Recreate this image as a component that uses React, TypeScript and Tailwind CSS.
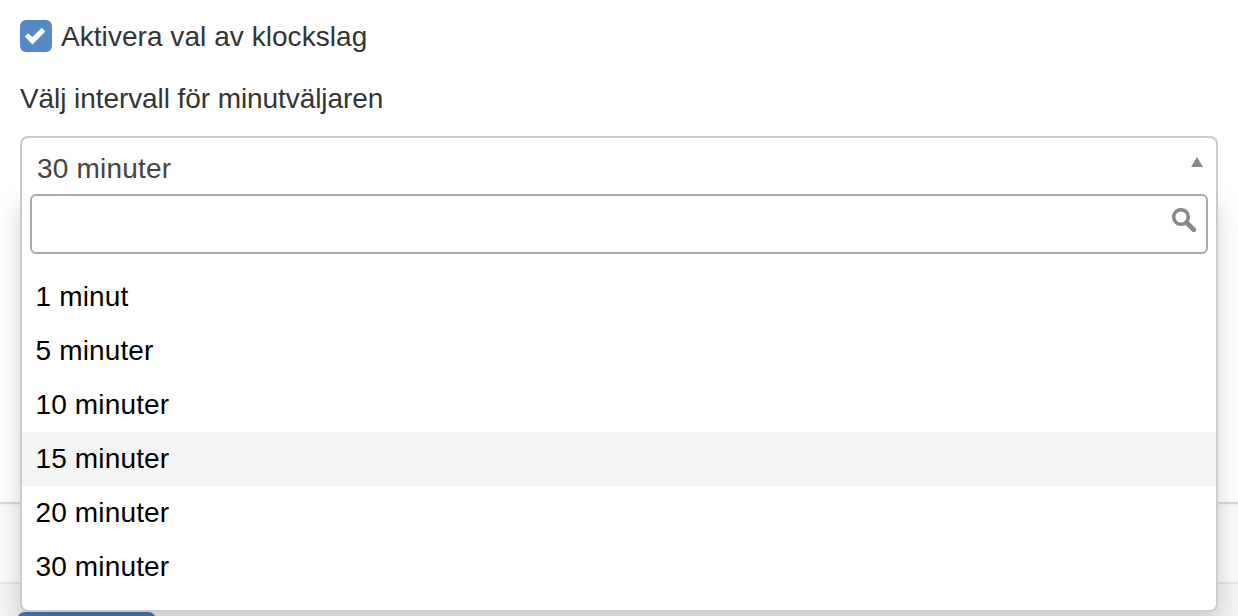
import { useState } from 'react';

const options = ['1 minut', '5 minuter', '10 minuter', '15 minuter', '20 minuter', '30 minuter'];

export default function App() {
  const [checked, setChecked] = useState(true);
  const [search, setSearch] = useState('');
  const [active, setActive] = useState('15 minuter');

  return (
    <div className="h-[616px] overflow-hidden bg-white font-['Liberation_Sans',Arial,sans-serif] text-[28px] text-[#333333]">
      <div className="h-[504px] border-b-2 border-[#dadada] px-5 pt-5">
        <label className="flex h-8 w-fit items-center">
          <input
            type="checkbox"
            className="sr-only"
            checked={checked}
            onChange={(e) => setChecked(e.target.checked)}
          />
          <span className="h-8 w-8 rounded-[6px] bg-[#5489c5]">
            {checked && (
              <svg viewBox="0 0 32 32" className="h-8 w-8" fill="#fff">
                <path d="M4.8 16.6 8 13.2 12.3 17.1 21.8 7.8 25.4 11.4 12.5 24.4Z" />
              </svg>
            )}
          </span>
          <span className="ml-[9px] pt-[2px] leading-8 tracking-[0.05px]">Aktivera val av klockslag</span>
        </label>

        <div className="mt-[30px] h-8 w-fit pt-px leading-8 tracking-[-0.08px]">Välj intervall för minutväljaren</div>

        <div className="relative mt-[22px]">
          <div className="relative z-20 flex h-[58px] justify-between rounded-t-[8px] border-2 border-b-0 border-[#cccccc] bg-white pr-[13px] pl-[15px]">
            <span className="mt-[15px] h-8 leading-8 tracking-[0.2px] text-[#444444]">30 minuter</span>
            <svg viewBox="0 0 12 10" className="mt-[19px] h-[10px] w-3" fill="#888">
              <path d="M6 0 12 10H0Z" />
            </svg>
          </div>

          <div className="absolute top-[58px] left-0 z-10 h-[418px] w-full rounded-b-[8px] border-2 border-t-0 border-[#cccccc] bg-white text-black shadow-[0_12px_24px_rgba(0,0,0,0.175)]">
            <div className="mx-2 flex h-[60px] rounded-[6px] border-2 border-[#aaaaaa] pr-[10px]">
              <input
                className="min-w-0 flex-1 px-2 outline-none"
                value={search}
                onChange={(e) => setSearch(e.target.value)}
              />
              <svg viewBox="0 0 24 24" className="mt-3 h-6 w-6" fill="none" stroke="#888">
                <circle cx="9" cy="9" r="7.3" strokeWidth="3.5" />
                <path d="M14.7 14.7 21.8 21.8" strokeWidth="4.8" strokeLinecap="round" />
              </svg>
            </div>
            <ul className="mt-4">
              {options.map((option) => (
                <li
                  key={option}
                  className={`h-[54px] pl-[13.5px] leading-[54px] tracking-[0.15px] ${option === active ? 'bg-[#f4f4f4]' : ''}`}
                  onMouseEnter={() => setActive(option)}
                >
                  {option}
                </li>
              ))}
            </ul>
          </div>
        </div>
      </div>

      <div className="h-20 border-b-2 border-[#e5e5e5] bg-[#fafafa] shadow-[inset_0_3px_3px_-1px_rgba(0,0,0,0.04)]" />
      <div className="h-8 bg-[#f4f4f4] pt-7 pl-[17px]">
        <div className="h-[60px] w-[139px] rounded-[8px] border-2 border-[#4376b5] bg-[#4a7ebb]" />
      </div>
    </div>
  );
}
